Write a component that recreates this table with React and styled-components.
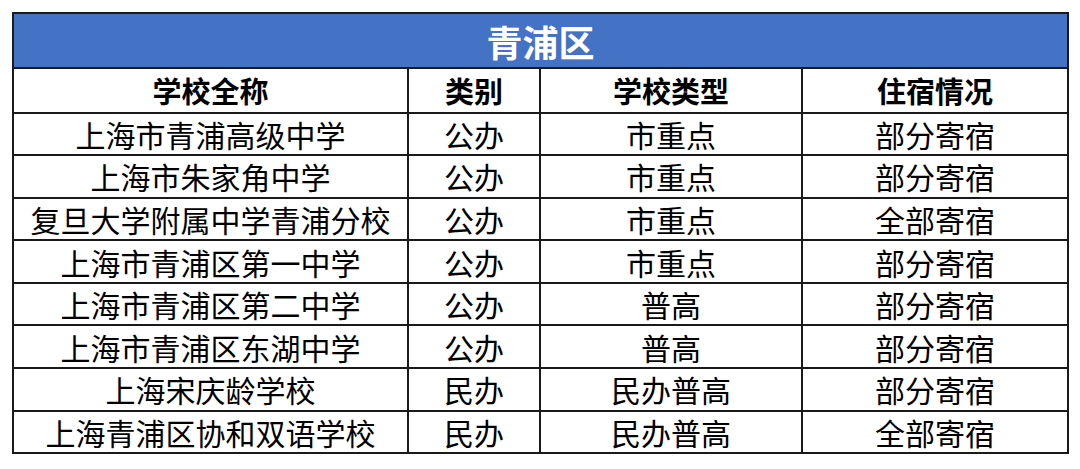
import React from "react";
import styled, { createGlobalStyle } from "styled-components";

const Global = createGlobalStyle`
  html, body { margin: 0; padding: 0; background: #fff; }
  body { font-family: "Noto Sans CJK SC", "Noto Sans", sans-serif; }
`;

const Page = styled.div`
  padding: 12px 0 0 12px;
  width: 1080px;
  height: 469px;
  box-sizing: border-box;
`;

const Table = styled.table`
  border-collapse: collapse;
  table-layout: fixed;
  width: 1055px;
  color: #000;
`;

const TitleCell = styled.th`
  background: #4472c4;
  color: #fff;
  font-size: 36px;
  font-weight: 700;
  height: 53px;
  padding: 0;
  line-height: 1;
  border: 2px solid #1a1a1a;
  text-align: center;
  vertical-align: middle;
`;

const HeadCell = styled.th`
  font-size: 29px;
  font-weight: 700;
  height: 42.5px;
  padding: 0;
  line-height: 1;
  border: 2px solid #1a1a1a;
  text-align: center;
  vertical-align: middle;
`;

const Cell = styled.td`
  font-size: 30px;
  font-weight: 400;
  height: 40.6px;
  padding: 0;
  line-height: 1;
  border: 2px solid #1a1a1a;
  text-align: center;
  vertical-align: middle;
  white-space: nowrap;
`;

const rows = [
  ["上海市青浦高级中学", "公办", "市重点", "部分寄宿"],
  ["上海市朱家角中学", "公办", "市重点", "部分寄宿"],
  ["复旦大学附属中学青浦分校", "公办", "市重点", "全部寄宿"],
  ["上海市青浦区第一中学", "公办", "市重点", "部分寄宿"],
  ["上海市青浦区第二中学", "公办", "普高", "部分寄宿"],
  ["上海市青浦区东湖中学", "公办", "普高", "部分寄宿"],
  ["上海宋庆龄学校", "民办", "民办普高", "部分寄宿"],
  ["上海青浦区协和双语学校", "民办", "民办普高", "全部寄宿"],
];

export default function App() {
  return (
    <>
      <Global />
      <Page>
        <Table>
          <colgroup>
            <col style={{ width: 395 }} />
            <col style={{ width: 132 }} />
            <col style={{ width: 262 }} />
            <col style={{ width: 266 }} />
          </colgroup>
          <thead>
            <tr>
              <TitleCell colSpan={4}>青浦区</TitleCell>
            </tr>
            <tr>
              <HeadCell>学校全称</HeadCell>
              <HeadCell>类别</HeadCell>
              <HeadCell>学校类型</HeadCell>
              <HeadCell>住宿情况</HeadCell>
            </tr>
          </thead>
          <tbody>
            {rows.map((r, i) => (
              <tr key={i}>
                {r.map((c, j) => (
                  <Cell key={j}>{c}</Cell>
                ))}
              </tr>
            ))}
          </tbody>
        </Table>
      </Page>
    </>
  );
}
